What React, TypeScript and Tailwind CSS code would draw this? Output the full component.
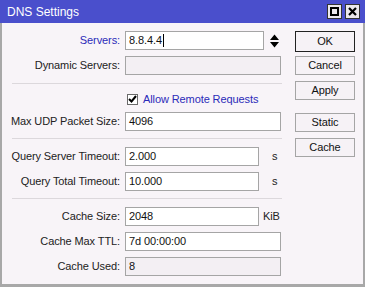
import React from "react";

const font = { fontFamily: '"Liberation Sans", Arial, sans-serif' };

function Label({ children, blue }: { children: React.ReactNode; blue?: boolean }) {
  return (
    <div className={`w-[118px] shrink-0 text-right ${blue ? "text-[#2b2bb8]" : "text-[#222]"}`}>
      {children}
    </div>
  );
}

function Field({
  label,
  value,
  width,
  disabled,
  blue,
  suffix,
  caret,
}: {
  label: string;
  value?: string;
  width: string;
  disabled?: boolean;
  blue?: boolean;
  suffix?: React.ReactNode;
  caret?: boolean;
}) {
  return (
    <div className="flex h-[19px] items-center">
      <Label blue={blue}>{label}</Label>
      <div
        className={`ml-[5px] flex h-[19px] items-center border border-[#a5a5a5] pl-[3px] text-[#111] ${width} ${
          disabled ? "bg-[#f3eff3]" : "bg-white"
        }`}
      >
        {value}
        {caret && <span className="ml-[1px] inline-block h-[13px] w-px bg-black" />}
      </div>
      {suffix}
    </div>
  );
}

function Sep() {
  return <div className="ml-[10px] h-px w-[270px] bg-[#dcd8dc]" />;
}

function Btn({ children, def }: { children: React.ReactNode; def?: boolean }) {
  return (
    <div
      className={`flex w-[60px] items-center justify-center border text-[#111] bg-[#f6f2f6] ${
        def ? "h-[21px] border-[#222]" : "h-[19px] border-[#a5a5a5]"
      }`}
    >
      {children}
    </div>
  );
}

export default function App() {
  return (
    <div className="h-[287px] w-[365px] bg-[#a8a8a8] text-[11px] tracking-[-0.1px]" style={font}>
      <div className="flex h-[23px] items-center justify-between bg-[#4a4fcc] pl-[7px] pr-[5px]">
        <span className="text-[12px] tracking-normal text-white">DNS Settings</span>
        <div className="flex gap-[3px]">
          <div className="flex h-[15px] w-[15px] items-center justify-center border border-[#333] bg-[#ece8ec]">
            <div className="h-[9px] w-[9px] border-[2px] border-black" />
          </div>
          <div className="flex h-[15px] w-[15px] items-center justify-center border border-[#333] bg-[#ece8ec]">
            <svg width="9" height="9" viewBox="0 0 9 9">
              <path d="M1 1 L8 8 M8 1 L1 8" stroke="black" strokeWidth="2.2" />
            </svg>
          </div>
        </div>
      </div>
      <div className="ml-[2px] flex h-[261px] w-[361px] bg-[#f8f4f8]">
        <div className="w-[291px] shrink-0 pt-[8px]">
          <div className="flex items-center">
            <Field label="Servers:" value="8.8.4.4" width="w-[139px]" blue caret />
            <svg className="ml-[6px]" width="9" height="14" viewBox="0 0 9 14">
              <path d="M4.5 0.5 L9 6 L0 6 Z M0 8 L9 8 L4.5 13.5 Z" fill="black" />
            </svg>
          </div>
          <div className="mt-[6px]">
            <Field label="Dynamic Servers:" width="w-[156px]" disabled />
          </div>
          <div className="mt-[8px]">
            <Sep />
          </div>
          <div className="mt-[8px] flex h-[14px] items-center pl-[125px]">
            <div className="flex h-[11px] w-[11px] items-center justify-center border border-[#6a6a6a] bg-white">
              <svg width="9" height="8" viewBox="0 0 9 8">
                <path d="M1 4 L3.5 6.5 L8 1" stroke="black" strokeWidth="2" fill="none" />
              </svg>
            </div>
            <span className="ml-[5px] text-[#2b2bb8]">Allow Remote Requests</span>
          </div>
          <div className="mt-[6px]">
            <Field label="Max UDP Packet Size:" value="4096" width="w-[156px]" />
          </div>
          <div className="mt-[7px]">
            <Sep />
          </div>
          <div className="mt-[8px] flex flex-col gap-[6px]">
            <Field
              label="Query Server Timeout:"
              value="2.000"
              width="w-[134px]"
              suffix={<span className="ml-[13px] text-[#222]">s</span>}
            />
            <Field
              label="Query Total Timeout:"
              value="10.000"
              width="w-[134px]"
              suffix={<span className="ml-[13px] text-[#222]">s</span>}
            />
          </div>
          <div className="mt-[7px]">
            <Sep />
          </div>
          <div className="mt-[8px] flex flex-col gap-[6px]">
            <Field
              label="Cache Size:"
              value="2048"
              width="w-[134px]"
              suffix={<span className="ml-[4px] text-[#222]">KiB</span>}
            />
            <Field label="Cache Max TTL:" value="7d 00:00:00" width="w-[156px]" />
            <Field label="Cache Used:" value="8" width="w-[156px]" disabled />
          </div>
        </div>
        <div className="flex flex-col pt-[8px] pl-[2px]">
          <Btn def>OK</Btn>
          <div className="mt-[4px]">
            <Btn>Cancel</Btn>
          </div>
          <div className="mt-[6px]">
            <Btn>Apply</Btn>
          </div>
          <div className="mt-[13px]">
            <Btn>Static</Btn>
          </div>
          <div className="mt-[6px]">
            <Btn>Cache</Btn>
          </div>
        </div>
      </div>
    </div>
  );
}
